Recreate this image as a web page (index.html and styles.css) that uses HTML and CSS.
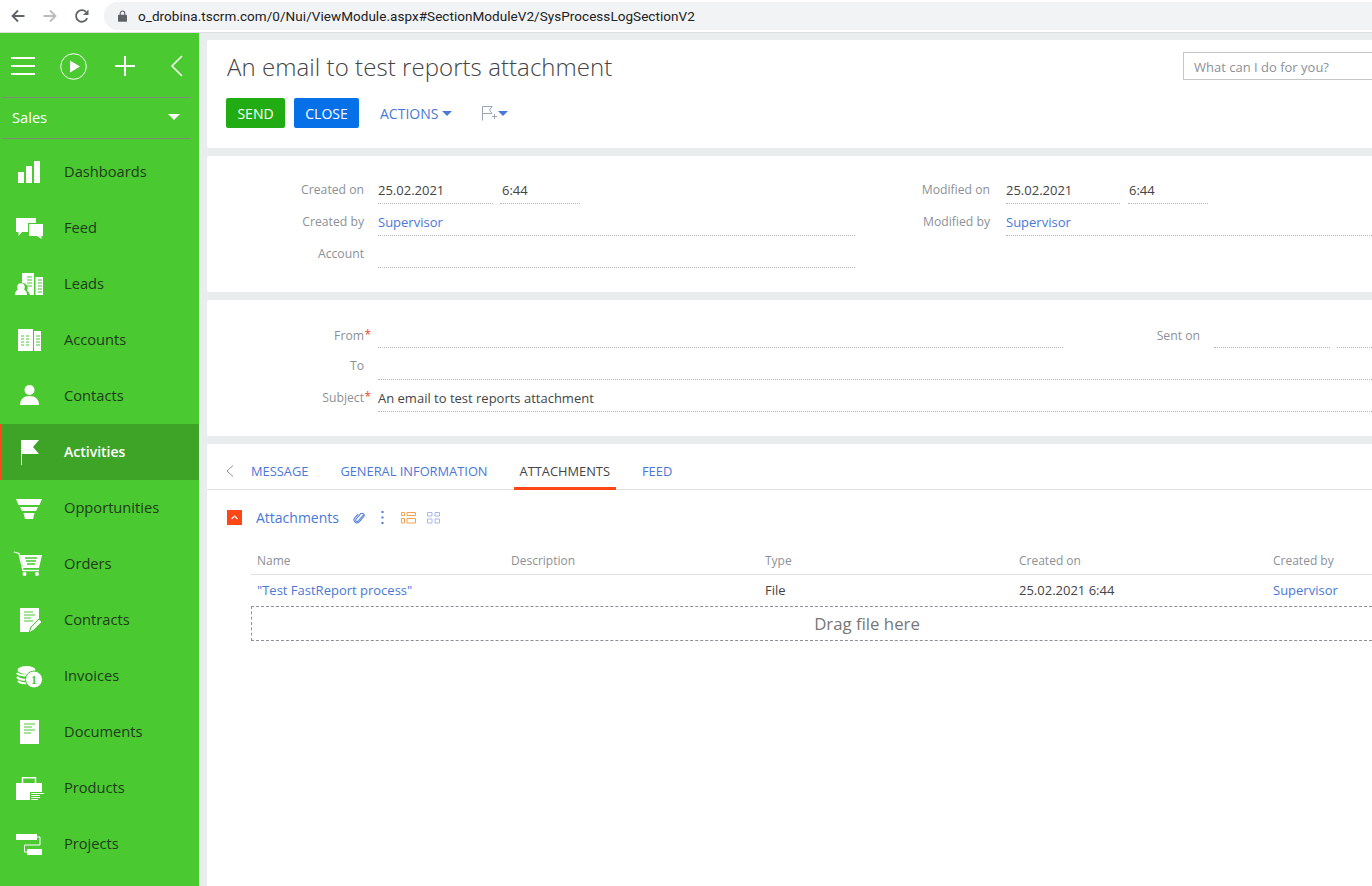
FILE: index.html
```html
<!DOCTYPE html>
<html lang="en">
<head>
  <meta charset="utf-8">
  <title>An email to test reports attachment</title>
  <link rel="stylesheet" href="styles.css">
</head>
<body>
  <header class="browser">
    <svg class="nav-icon" viewBox="0 0 16 16"><path d="M14.5 8H2.5M8 2.5L2.5 8L8 13.5" fill="none" stroke="#5f6368" stroke-width="1.8"/></svg>
    <svg class="nav-icon" viewBox="0 0 16 16"><path d="M1.5 8H13.5M8 2.5L13.5 8L8 13.5" fill="none" stroke="#b9bbbe" stroke-width="1.8"/></svg>
    <svg class="nav-icon" viewBox="0 0 16 16"><path d="M13.2 10.2A5.8 5.8 0 1 1 12 3.9" fill="none" stroke="#5f6368" stroke-width="1.8"/><path d="M14.5 1.5V7H9z" fill="#5f6368"/></svg>
    <div class="address">
      <svg class="lock" viewBox="0 0 10 13"><path d="M1 5h8a1 1 0 0 1 1 1v6a1 1 0 0 1-1 1H1a1 1 0 0 1-1-1V6a1 1 0 0 1 1-1z" fill="#5f6368"/><path d="M2.5 5.5V3.5a2.5 2.5 0 0 1 5 0v2" fill="none" stroke="#5f6368" stroke-width="1.2"/></svg>
      <span>o_drobina.tscrm.com/0/Nui/ViewModule.aspx#SectionModuleV2/SysProcessLogSectionV2</span>
    </div>
  </header>

  <div class="app">
    <aside class="sidebar">
      <div class="side-tools">
        <svg class="tool-menu" viewBox="0 0 24 20"><path d="M0 2h24M0 10h24M0 18h24" stroke="#fff" stroke-width="2"/></svg>
        <svg class="tool-play" viewBox="0 0 27 27"><circle cx="13.5" cy="13.5" r="12.8" fill="none" stroke="#fff" stroke-width="1"/><path d="M10 7.5L20 13.5L10 19.5z" fill="#fff"/></svg>
        <svg class="tool-plus" viewBox="0 0 20 20"><path d="M10 0V20M0 10H20" stroke="#fff" stroke-width="2"/></svg>
        <svg class="tool-back" viewBox="0 0 13 22"><path d="M12 1L2 11L12 21" fill="none" stroke="#fff" stroke-width="1.5"/></svg>
      </div>
      <div class="workplace">
        <span>Sales</span>
        <i class="caret-white"></i>
      </div>
      <nav class="side-nav">
        <a class="side-item" href="#">
          <svg class="side-icon" viewBox="0 0 32 32"><path d="M5 16h6v11H5zM13 10h6v17h-6zM21 5h6v22h-6z" fill="#fff"/></svg>
          Dashboards
        </a>
        <a class="side-item" href="#">
          <svg class="side-icon" viewBox="0 0 32 32"><path d="M3 6h20v5h-8v9H9l-3.500 4v-4H3z" fill="#fff"/><path d="M16 12h14v12h-1.500v3L24 24h-8z" fill="#fff"/></svg>
          Feed
        </a>
        <a class="side-item" href="#">
          <svg class="side-icon" viewBox="0 0 32 32"><path d="M9 5h12v22h-4a8 8 0 0 0-3-4.500a5 5 0 0 0-5-7.500z" fill="#fff"/><path d="M22.500 9H30v18h-7.500z" fill="#fff"/><path d="M14 9h5M14 12h5M14 15h5M14 18h5M25 12h4M25 15h4M25 18h4M25 21h4M25 24h4" stroke="#4ac931" stroke-width="1"/><circle cx="8" cy="19" r="3.800" fill="#fff"/><path d="M2 27c0-4 2.500-6 6-6s6 2 6 6z" fill="#fff"/></svg>
          Leads
        </a>
        <a class="side-item" href="#">
          <svg class="side-icon" viewBox="0 0 32 32"><path d="M5 5h15v22H5zM21 7h7v20h-7z" fill="#fff"/><path d="M8 12h3M13 12h3M8 15h3M13 15h3M8 18h3M13 18h3M8 21h3M13 21h3M23 12h4M23 15h4M23 18h4M23 21h4" stroke="#4ac931" stroke-width="1"/></svg>
          Accounts
        </a>
        <a class="side-item" href="#">
          <svg class="side-icon" viewBox="0 0 32 32"><circle cx="16.500" cy="10" r="5" fill="#fff"/><path d="M7 25c0-6 4-9 9.500-9s9.500 3 9.500 9z" fill="#fff"/></svg>
          Contacts
        </a>
        <a class="side-item active" href="#">
          <svg class="side-icon" viewBox="0 0 32 32"><path d="M8 4h1v25H8z" fill="#fff"/><path d="M9 4h17l-6 7 6 7H9z" fill="#fff"/></svg>
          Activities
        </a>
        <a class="side-item" href="#">
          <svg class="side-icon" viewBox="0 0 32 32"><path d="M3 7h26l-2.500 6h-21zM7 15h18l-2 4H9zM10.500 21h11l-1.500 6h-8z" fill="#fff"/></svg>
          Opportunities
        </a>
        <a class="side-item" href="#">
          <svg class="side-icon" viewBox="0 0 32 32"><path d="M1 4l5 1.500 4 17h16" fill="none" stroke="#fff" stroke-width="1.300"/><path d="M7 7h22l-3 13H10z" fill="#fff"/><path d="M12 10h12M13 13h10M14 16h8" stroke="#4ac931" stroke-width="1.300"/><circle cx="11.500" cy="26" r="2" fill="#fff"/><circle cx="24" cy="26" r="2" fill="#fff"/></svg>
          Orders
        </a>
        <a class="side-item" href="#">
          <svg class="side-icon" viewBox="0 0 32 32"><path d="M7 4h19v11l-9 10v3H7z" fill="#fff"/><path d="M11 8h9M11 11h11M11 14h7M11 17h9" stroke="#4ac931" stroke-width="1"/><path d="M16 29l2-6 8-8 3 3-8 8z" fill="#fff" stroke="#4ac931" stroke-width="1"/></svg>
          Contracts
        </a>
        <a class="side-item" href="#">
          <svg class="side-icon" viewBox="0 0 32 32"><ellipse cx="13.500" cy="10" rx="9" ry="4" fill="#fff"/><path d="M4 13c2 3 12 3 15 1M4 17c2 2.500 7 3 10 2.500M5 21c2 2 6 2.500 9 2" fill="none" stroke="#fff" stroke-width="2.200"/><circle cx="21" cy="19.500" r="8.500" fill="#fff" stroke="#4ac931" stroke-width="1"/><text class="coin" x="21" y="24" text-anchor="middle">1</text></svg>
          Invoices
        </a>
        <a class="side-item" href="#">
          <svg class="side-icon" viewBox="0 0 32 32"><path d="M7 4h19v24H7z" fill="#fff"/><path d="M11 8h11M11 11h8M11 14h11M11 17h7" stroke="#4ac931" stroke-width="1"/></svg>
          Documents
        </a>
        <a class="side-item" href="#">
          <svg class="side-icon" viewBox="0 0 32 32"><path d="M3 11h26v9H17v8H3z" fill="#fff"/><path d="M9.500 11V5.800h13V11" fill="none" stroke="#fff" stroke-width="1.500"/><path d="M18 21.500h13M18 23.500h9M18 25.500h9M18 27.500h7" stroke="#fff" stroke-width="1"/></svg>
          Products
        </a>
        <a class="side-item" href="#">
          <svg class="side-icon" viewBox="0 0 32 32"><path d="M3 6h21v6H3zM14 21h15v6H14z" fill="#fff"/><path d="M24 9h3v8H11.500v7H14" fill="none" stroke="#fff" stroke-width="1"/></svg>
          Projects
        </a>
      </nav>
    </aside>

    <main class="content">
      <section class="card head-card">
        <div class="head-top">
          <h1 class="page-title">An email to test reports attachment</h1>
          <div class="search">What can I do for you?</div>
        </div>
        <div class="actions">
          <button class="btn btn-send">SEND</button>
          <button class="btn btn-close">CLOSE</button>
          <a class="action-link" href="#">ACTIONS<i class="caret-blue"></i></a>
          <a class="flag-link" href="#">
            <svg class="flag-icon" viewBox="0 0 18 16"><path d="M2.500 15.500V1.500H12L9.500 5l2.500 3.500H3M12 11.500h5M14.500 9v5" fill="none" stroke="#9aa7b8" stroke-width="1"/></svg>
            <i class="caret-blue"></i>
          </a>
        </div>
      </section>

      <section class="card info-card">
        <div class="col col-left">
          <div class="row">
            <label class="lbl">Created on</label>
            <div class="val val-date">25.02.2021</div>
            <div class="val val-time">6:44</div>
          </div>
          <div class="row">
            <label class="lbl">Created by</label>
            <div class="val val-wide"><a href="#">Supervisor</a></div>
          </div>
          <div class="row">
            <label class="lbl">Account</label>
            <div class="val val-wide"></div>
          </div>
        </div>
        <div class="col col-right">
          <div class="row">
            <label class="lbl">Modified on</label>
            <div class="val val-date">25.02.2021</div>
            <div class="val val-time">6:44</div>
          </div>
          <div class="row">
            <label class="lbl">Modified by</label>
            <div class="val val-wide"><a href="#">Supervisor</a></div>
          </div>
        </div>
      </section>

      <section class="card mail-card">
        <div class="row row-from">
          <label class="lbl">From<b class="req">*</b></label>
          <div class="val val-from"></div>
          <label class="lbl lbl-sent">Sent on</label>
          <div class="val val-date"></div>
          <div class="val val-time"></div>
        </div>
        <div class="row">
          <label class="lbl">To</label>
          <div class="val val-wide"></div>
        </div>
        <div class="row">
          <label class="lbl">Subject<b class="req">*</b></label>
          <div class="val val-wide">An email to test reports attachment</div>
        </div>
      </section>

      <section class="card tabs-card">
        <div class="tabs">
          <svg class="tab-back" viewBox="0 0 8 12"><path d="M7 .5L1 6L7 11.500" fill="none" stroke="#8e9297" stroke-width="1"/></svg>
          <a class="tab" href="#">MESSAGE</a>
          <a class="tab" href="#">GENERAL INFORMATION</a>
          <a class="tab current" href="#">ATTACHMENTS</a>
          <a class="tab" href="#">FEED</a>
        </div>
        <div class="detail-head">
          <span class="collapse">
            <svg viewBox="0 0 15 15"><path d="M4.500 9L7.500 6L10.500 9" fill="none" stroke="#fff" stroke-width="1.200"/></svg>
          </span>
          <span class="detail-title">Attachments</span>
          <svg class="clip" viewBox="0 0 14 14"><path d="M12 3.500L6 10.500a1.600 1.600 0 0 1-2.500-2L9 2a2.500 2.500 0 0 1 3.800 3L7 11.800A3.500 3.500 0 0 1 1.800 7.200L6 2.500" fill="none" stroke="#4a78d8" stroke-width="1.200"/></svg>
          <svg class="dots" viewBox="0 0 3 13"><path d="M0.500 0h2v2h-2zM0.500 5.500h2v2h-2zM0.500 11h2v2h-2z" fill="#4a78d8"/></svg>
          <svg class="view-icon" viewBox="0 0 15 12"><path d="M0.500 0.500h3v3h-3zM6 .5h8.500v3H6zM0.500 6.500h3v4.500h-3zM6 6.500h8.500v4.500H6z" fill="none" stroke="#f5a14d" stroke-width="1"/></svg>
          <svg class="view-icon" viewBox="0 0 13 12"><path d="M0.500 0.500h4.500v3.500H0.500zM8 .5h4.500v3.500H8zM0.500 7h4.500v4H0.500zM8 7h4.500v4H8z" fill="none" stroke="#a6b8e6" stroke-width="1"/></svg>
        </div>
        <div class="grid-wrap">
          <div class="grid grid-head">
            <span>Name</span>
            <span>Description</span>
            <span>Type</span>
            <span>Created on</span>
            <span>Created by</span>
          </div>
          <div class="grid grid-row">
            <a href="#">"Test FastReport process"</a>
            <span></span>
            <span>File</span>
            <span>25.02.2021 6:44</span>
            <a href="#">Supervisor</a>
          </div>
          <div class="dropzone">Drag file here</div>
        </div>
      </section>
    </main>
  </div>
</body>
</html>
```

FILE: styles.css
```css
* {
  box-sizing: border-box;
}
html,
body {
  margin: 0;
  height: 100%;
  overflow: hidden;
}
body {
  width: 1372px;
  height: 886px;
  background: #fff;
  font-family: "Open Sans", sans-serif;
  font-size: 13px;
  color: #444;
  display: flex;
  flex-direction: column;
}
a {
  color: #4a78d8;
  text-decoration: none;
}

/* browser bar */
.browser {
  height: 33px;
  flex: none;
  display: flex;
  align-items: center;
  padding-left: 10px;
  background: #fff;
  border-bottom: 1px solid #dcdfe0;
}
.nav-icon {
  width: 16px;
  height: 16px;
  margin-right: 16px;
  flex: none;
}
.address {
  margin-left: -2px;
  height: 28px;
  flex: 1;
  min-width: 0;
  display: flex;
  align-items: center;
  padding-left: 14px;
  background: #f1f3f4;
  border-radius: 14px 0 0 14px;
  font-family: "Roboto", sans-serif;
  font-size: 13.500px;
  letter-spacing: .05px;
  color: #202124;
}
.lock {
  width: 9px;
  height: 12px;
  margin-right: 11px;
}

.app {
  flex: 1;
  display: flex;
  min-height: 0;
}

/* green side panel */
.sidebar {
  width: 199px;
  flex: none;
  background: #4ac931;
  overflow: hidden;
}
.side-tools {
  height: 64px;
  padding: 2px 0 0 11px;
  display: flex;
  align-items: center;
}
.tool-menu {
  width: 24px;
  height: 20px;
  margin-right: 25px;
}
.tool-play {
  width: 27px;
  height: 27px;
  margin-right: 28px;
}
.tool-plus {
  width: 20px;
  height: 20px;
  margin-right: 35px;
}
.tool-back {
  width: 13px;
  height: 22px;
}
.workplace {
  margin: 0 8px 0 2px;
  height: 42px;
  padding: 0 10px 2px;
  display: flex;
  align-items: center;
  justify-content: space-between;
  border-top: 1px solid #7f8d7c;
  border-bottom: 1px solid #7f8d7c;
  color: #fff;
  font-size: 14.670px;
}
.caret-white {
  border-left: 6px solid transparent;
  border-right: 6px solid transparent;
  border-top: 6px solid #fff;
  margin-right: 1px;
}
.side-nav {
  padding-top: 5px;
}
.side-item {
  height: 56px;
  display: flex;
  align-items: center;
  padding: 0 0 2px 13px;
  color: #1f3d1a;
  font-size: 14.670px;
}
.side-item.active {
  background: #3da428;
  box-shadow: inset 2px 0 0 #ff4617;
  color: #fff;
  font-size: 14px;
  font-weight: 600;
}
.side-icon {
  width: 32px;
  height: 32px;
  margin: 2px 19px 0 0;
  flex: none;
}
.coin {
  font-family: "Liberation Serif", serif;
  font-size: 12px;
  font-weight: 700;
  fill: #4ac931;
}

/* right side */
.content {
  flex: 1;
  min-width: 0;
  padding: 7px 0 0 8px;
  background: #e9eded;
  display: flex;
  flex-direction: column;
  gap: 8px;
}
.card {
  background: #fff;
  border-radius: 2px 0 0 2px;
  flex: none;
}
.head-card {
  height: 108px;
  padding: 9px 0 0 20px;
}
.head-top {
  display: flex;
  justify-content: space-between;
}
.page-title {
  margin: 0;
  font-size: 24px;
  font-weight: 300;
  letter-spacing: .06px;
  line-height: 35px;
  color: #444;
}
.search {
  width: 189px;
  height: 28px;
  margin-top: 3px;
  padding-left: 10px;
  line-height: 28px;
  border: 1px solid #c4c6c8;
  border-right: 0;
  font-size: 13px;
  color: #8d9196;
}
.actions {
  margin: 14px 0 0 -1px;
  display: flex;
  align-items: center;
}
.btn {
  height: 30px;
  border: 0;
  border-radius: 2px;
  color: #fff;
  font-family: inherit;
  font-size: 14px;
  padding: 0;
}
.btn-send {
  width: 59px;
  background: #22ac14;
  margin-right: 9px;
}
.btn-close {
  width: 65px;
  background: #0670e8;
  margin-right: 21px;
}
.action-link {
  font-size: 14px;
  margin-right: 28px;
  display: flex;
  align-items: center;
}
.caret-blue {
  margin-left: 4px;
  border-left: 5px solid transparent;
  border-right: 5px solid transparent;
  border-top: 5px solid #4a78d8;
}
.flag-link {
  display: flex;
  align-items: center;
}
.flag-icon {
  width: 18px;
  height: 16px;
}
.flag-link .caret-blue {
  margin-left: 0;
}

.info-card {
  height: 136px;
  padding-top: 16px;
  display: flex;
}
.col-left {
  width: 648px;
}
.col-left .val-wide {
  width: 477px;
}
.col-right {
  flex: 1;
  min-width: 0;
}
.col-right .lbl {
  width: 135px;
}
.col-right .val {
  margin-left: 16px;
}
.col-right .val-date {
  width: 114px;
}
.col-right .val-time {
  margin-left: 8px;
  padding-left: 1px;
}
.row {
  height: 32px;
  display: flex;
  align-items: flex-end;
}
.lbl {
  width: 157px;
  flex: none;
  padding-bottom: 6px;
  text-align: right;
  font-size: 12.200px;
  color: #8d9196;
  position: relative;
}
.req {
  position: absolute;
  right: -7px;
  top: -1px;
  font-size: 12px;
  color: #f0452a;
  font-weight: 400;
}
.val {
  height: 24px;
  margin-left: 14px;
  line-height: 20px;
  border-bottom: 1px dotted #b4b7b9;
  color: #444;
}
.val-date {
  width: 115px;
}
.val-time {
  width: 80px;
  margin-left: 7px;
  padding-left: 2px;
}
.val-wide {
  flex: 1;
}

.mail-card {
  height: 136px;
  padding-top: 16px;
}
.row-from .lbl {
  padding-bottom: 4px;
}
.val-from {
  width: 685px;
  flex: none;
}
.lbl-sent {
  width: 137px;
}
.row-from .val-date {
  width: 116px;
}
.row-from .val-time {
  flex: 1;
}

/* tabs and detail */
.tabs-card {
  flex: 1;
  border-radius: 2px 0 0 0;
}
.tabs {
  height: 46px;
  display: flex;
  align-items: flex-end;
  border-bottom: 1px solid #dfe1e2;
  padding-left: 19px;
}
.tab-back {
  width: 8px;
  height: 12px;
  margin: 9px 11px 0 0;
  align-self: center;
}
.tab {
  height: 46px;
  padding: 0 6px;
  margin-right: 20px;
  line-height: 55px;
  font-size: 12.850px;
  margin-bottom: -1px;
  border-bottom: 3px solid transparent;
}
.tab.current {
  color: #444;
  border-bottom-color: #ff4617;
}
.detail-head {
  height: 55px;
  display: flex;
  align-items: center;
  padding-left: 20px;
}
.collapse {
  width: 15px;
  height: 15px;
  margin-right: 14px;
  background: #ff4617;
  display: flex;
}
.detail-title {
  font-size: 14px;
  color: #4a78d8;
  margin-right: 14px;
}
.clip {
  width: 12px;
  height: 12px;
  margin-right: 16px;
}
.dots {
  width: 3px;
  height: 13px;
  margin-right: 17px;
}
.view-icon {
  width: 15px;
  height: 12px;
  margin-right: 11px;
}
.view-icon:last-child {
  width: 13px;
  margin-right: 0;
}
.grid-wrap {
  margin-left: 44px;
}
.grid {
  display: grid;
  grid-template-columns: repeat(4, 254px) minmax(0, 1fr);
  padding-left: 6px;
}
.grid-head {
  height: 30px;
  line-height: 32px;
  font-size: 12px;
  color: #8d9196;
  border-bottom: 1px solid #dfe1e2;
}
.grid-row {
  height: 31px;
  line-height: 31px;
  font-size: 13px;
}
.dropzone {
  height: 35px;
  padding-left: 110px;
  line-height: 34px;
  border: 1px dashed #8d9196;
  border-right: 0;
  text-align: center;
  font-size: 16.800px;
  color: #777;
}
```
